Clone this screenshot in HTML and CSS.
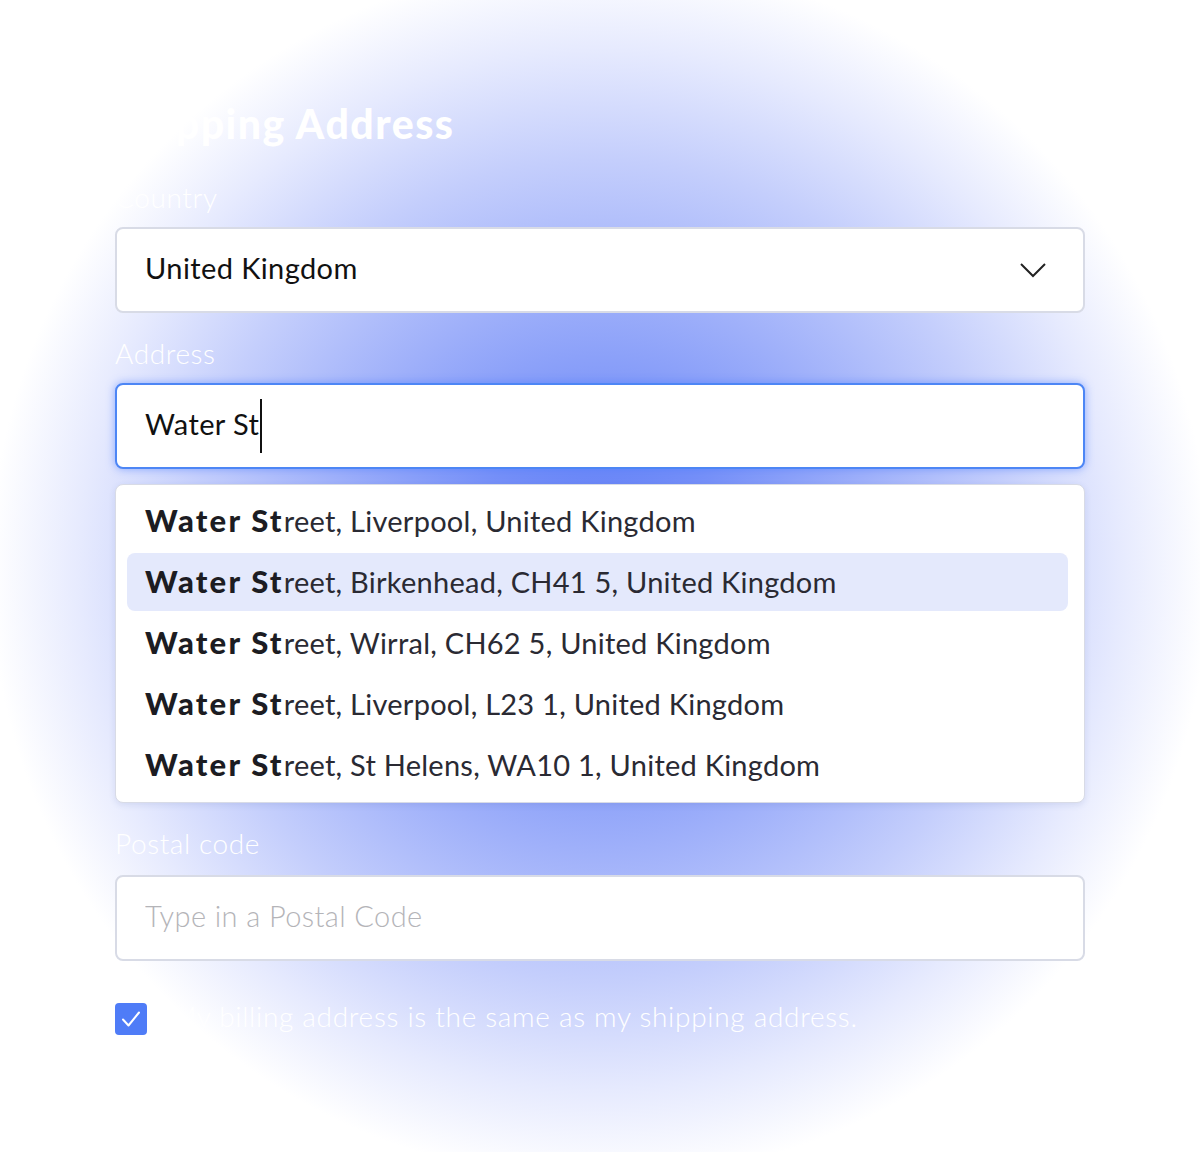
FILE: index.html
```html
<!DOCTYPE html>
<html lang="en">
<head>
  <meta charset="UTF-8" />
  <meta name="viewport" content="width=device-width, initial-scale=1.0" />
  <title>Shipping Address</title>
  <link rel="stylesheet" href="styles.css">
</head>
<body>

  <div class="page">
    <form class="address-form" onsubmit="return false">
      <h2 class="title">Shipping Address</h2>

      <label class="field-label">Country</label>
      <div class="select-box">
        <span>United Kingdom</span>
        <svg class="chevron" width="28" height="16" viewBox="0 0 28 16">
          <polyline points="2,2 14,14 26,2" fill="none" stroke="#222" stroke-width="2" />
        </svg>
      </div>

      <label class="field-label">Address</label>
      <div class="text-box focused">
        <span>Water St</span><span class="caret"></span>
      </div>

      <!-- autocomplete suggestions -->
      <ul class="suggestions">
        <li><b>Water St</b>reet, Liverpool, United Kingdom</li>
        <li class="active"><b>Water St</b>reet, Birkenhead, CH41 5, United Kingdom</li>
        <li><b>Water St</b>reet, Wirral, CH62 5, United Kingdom</li>
        <li><b>Water St</b>reet, Liverpool, L23 1, United Kingdom</li>
        <li><b>Water St</b>reet, St Helens, WA10 1, United Kingdom</li>
      </ul>

      <label class="field-label postal">Postal code</label>
      <input class="text-input" type="text" placeholder="Type in a Postal Code" />

      <label class="check-row">
        <span class="check-box">
          <svg width="32" height="32" viewBox="0 0 32 32">
            <polyline points="8,16.5 13.5,22.5 24,9.5" fill="none" stroke="#fff" stroke-width="2" stroke-linecap="round" stroke-linejoin="round" />
          </svg>
        </span>
        <span class="check-text">My billing address is the same as my shipping address.</span>
      </label>
    </form>
  </div>

</body>
</html>
```

FILE: styles.css
```css
body {
  margin: 0;
  font-family: 'Lato', 'Noto Sans', sans-serif;
  color: #222;
  background: #fff;
}

/* soft blue glow behind the form */
.page {
  min-height: 1152px;
  background: radial-gradient(circle at 600px 570px,
    #5a7af7 0,
    #7690f8 140px,
    #9fb0fa 280px,
    #c4cefc 410px,
    #e6eafe 520px,
    #fff 610px);
  overflow: hidden;
}

.address-form {
  width: 970px;
  margin: 0 auto;
  padding-top: 100px;
}

.title {
  margin: 0 0 31px;
  font-size: 41px;
  line-height: 48px;
  font-weight: 900;
  letter-spacing: 1.5px;
  color: #fff;
}

.field-label {
  display: block;
  font-size: 28px;
  line-height: 36px;
  font-weight: 300;
  letter-spacing: 0.6px;
  color: #fff;
  margin-bottom: 12px;
}

.select-box, .text-box, .text-input {
  display: flex;
  align-items: center;
  box-sizing: border-box;
  width: 100%;
  height: 86px;
  padding: 0 28px 6px;
  background: #fff;
  border: 2px solid #d8dbe6;
  border-radius: 8px;
  font-family: inherit;
  font-size: 29px;
  letter-spacing: 0.4px;
  color: #111;
  margin-bottom: 22px;
}

.select-box {
  justify-content: space-between;
  padding-right: 36px;
}

.chevron {
  margin-top: 6px;
}

.text-box.focused {
  border-color: #4d86f5;
  box-shadow: 0 0 8px rgba(70, 120, 255, 0.55);
  margin-bottom: 15px;
}

.caret {
  display: inline-block;
  width: 2px;
  height: 54px;
  background: #111;
  margin: 6px 0 0 1px;
}

.suggestions {
  list-style: none;
  margin: 0 0 22px;
  padding: 7px 16px 8px 11px;
  background: #fff;
  border: 1px solid #d8dbe6;
  border-radius: 8px;
  box-shadow: 0 2px 6px rgba(60, 80, 160, 0.12);
}

.suggestions li {
  height: 58px;
  line-height: 56px;
  padding-left: 18px;
  margin-bottom: 3px;
  border-radius: 8px;
  font-size: 29px;
  letter-spacing: 0.25px;
  color: #2a2a33;
}

.suggestions li:last-child {
  margin-bottom: 0;
}

.suggestions li b {
  font-size: 31px;
  font-weight: 900;
  letter-spacing: 2.2px;
  color: #1c1c22;
}

.suggestions li.active {
  background: #e4e9fc;
}

.field-label.postal {
  margin-bottom: 14px;
}

.text-input {
  outline: none;
  margin-bottom: 42px;
}

.text-input::placeholder {
  color: #b4b4b8;
  font-weight: 300;
}

.check-row {
  display: flex;
  align-items: center;
  gap: 24px;
}

.check-box {
  width: 32px;
  height: 32px;
  border-radius: 4px;
  background: #4f7cf7;
  display: flex;
}

.check-text {
  font-size: 28px;
  font-weight: 300;
  letter-spacing: 0.7px;
  color: #fff;
  margin-top: -6px;
}
```
